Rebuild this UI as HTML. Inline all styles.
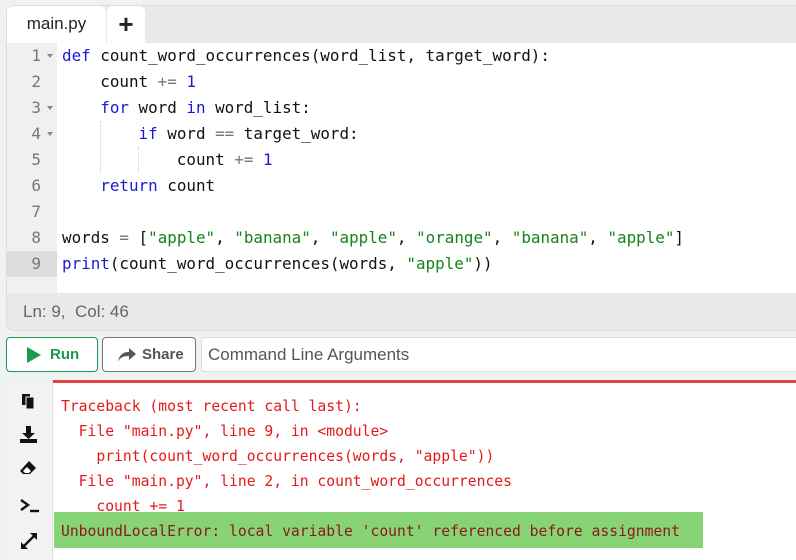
<!DOCTYPE html>
<html><head><style>
*{margin:0;padding:0;box-sizing:border-box}
body{width:796px;height:556px;background:#eef2f3;font-family:"Liberation Sans",sans-serif;position:relative;overflow:hidden}
.ed{position:absolute;left:6px;top:5px;width:800px;height:326px;background:#e9e9e9;border-radius:8px;border:1px solid #dcdcdc}
.tab{position:absolute;top:0;height:37px;background:#fff;border-radius:6px 6px 0 0;font-size:17px;color:#222;text-align:center;line-height:36px}
.code{position:absolute;left:0;top:37px;width:800px;height:250px;background:#fff}
.gut{position:absolute;left:0;top:0;width:50px;height:250px;background:#f0f0f0}
.ln{position:absolute;left:0;width:50px;height:26px;font:16px "DejaVu Sans Mono",monospace;color:#777;line-height:26px}
.ln span{position:absolute;right:16px}
.ln i{position:absolute;left:40px;top:11px;border:3.5px solid transparent;border-top:4px solid #888;border-bottom:0}
.l{position:absolute;left:55px;height:26px;font:15.9px "DejaVu Sans Mono",monospace;line-height:26px;white-space:pre;color:#111}
.k{color:#1a1ad6}.n{color:#1a1ad6}.s{color:#16821a}.o{color:#777}
.status{position:absolute;left:23px;font-size:17px;color:#666}
.btn{position:absolute;top:337px;height:35px;border-radius:4px;background:#fff;font-weight:bold;font-size:15px;line-height:33px}
.inp{position:absolute;left:201px;top:337px;width:600px;height:35px;border:1px solid #ddd;border-radius:4px;background:#fff;font-size:17px;color:#555;line-height:33px;padding-left:6px}
.out{position:absolute;left:6px;top:380px;width:800px;height:180px;background:#fff;border-radius:8px 0 0 0}
.side{position:absolute;left:0;top:0;width:47px;height:180px;background:#f2f2f2;border-radius:8px 0 0 0;border-right:1px solid #ddd}
.red{position:absolute;left:47px;top:0;width:760px;height:3px;background:#d44}
.o1{position:absolute;left:55px;font:14.7px "DejaVu Sans Mono",monospace;color:#e51919;white-space:pre;line-height:25px}
.green{position:absolute;left:48px;top:132px;width:649px;height:36px;background:#88d474}
.ic{position:absolute;left:14px}
</style></head><body>
<div class="ed">
 <div class="tab" style="left:0;width:99px">main.py</div>
 <div class="tab" style="left:100px;width:38px;font-size:26px;font-weight:bold">+</div>
 <div class="code">
  <div class="gut"></div>
  <div class="ln" style="top:0"><span>1</span><i></i></div>
  <div class="ln" style="top:26px"><span>2</span></div>
  <div class="ln" style="top:52px"><span>3</span><i></i></div>
  <div class="ln" style="top:78px"><span>4</span><i></i></div>
  <div class="ln" style="top:104px"><span>5</span></div>
  <div class="ln" style="top:130px"><span>6</span></div>
  <div class="ln" style="top:156px"><span>7</span></div>
  <div class="ln" style="top:182px"><span>8</span></div>
  <div class="ln" style="top:208px;background:#ddd"><span>9</span></div>
  <div style="position:absolute;left:93px;top:78px;height:52px;border-left:1px dotted #ccc"></div>
  <div style="position:absolute;left:131px;top:104px;height:26px;border-left:1px dotted #ccc"></div>
  <div class="l" style="top:0"><span class="k">def</span> count_word_occurrences(word_list, target_word):</div>
  <div class="l" style="top:26px">    count <span class="o">+=</span> <span class="n">1</span></div>
  <div class="l" style="top:52px">    <span class="k">for</span> word <span class="k">in</span> word_list:</div>
  <div class="l" style="top:78px">        <span class="k">if</span> word <span class="o">==</span> target_word:</div>
  <div class="l" style="top:104px">            count <span class="o">+=</span> <span class="n">1</span></div>
  <div class="l" style="top:130px">    <span class="k">return</span> count</div>
  <div class="l" style="top:182px">words <span class="o">=</span> [<span class="s">"apple"</span>, <span class="s">"banana"</span>, <span class="s">"apple"</span>, <span class="s">"orange"</span>, <span class="s">"banana"</span>, <span class="s">"apple"</span>]</div>
  <div class="l" style="top:208px"><span class="k">print</span>(count_word_occurrences(words, <span class="s">"apple"</span>))</div>
 </div>
</div>
<div class="status" style="top:302px">Ln: 9,&nbsp; Col: 46</div>
<div class="btn" style="left:6px;width:92px;border:1px solid #1a9a4a;color:#1a9a4a"><svg style="position:absolute;left:20px;top:9px" width="14" height="16"><path d="M0 0L14 8L0 16Z" fill="#1a9a4a"/></svg><span style="position:absolute;left:43px">Run</span></div>
<div class="btn" style="left:102px;width:94px;border:1px solid #777;color:#555"><svg style="position:absolute;left:15px;top:10px" width="18" height="14"><path d="M11 0L18 6L11 12V8C6 8 2 9 0 14C1 8 4 4 11 4Z" fill="#555"/></svg><span style="position:absolute;left:39px">Share</span></div>
<div class="inp">Command Line Arguments</div>
<div class="out">
 <div class="side">
  <svg class="ic" style="top:12px" width="16" height="18"><path d="M2 2h8v11H2z" fill="#111"/><path d="M6 5h8v12H6z" fill="#111" stroke="#f2f2f2" stroke-width="1"/></svg>
  <svg class="ic" style="top:46px" width="18" height="18"><path d="M6 0h5v7h4l-6.5 6L2 7h4z M0 13h17v4H0z" fill="#111"/></svg>
  <svg class="ic" style="top:80px" width="18" height="16"><path d="M9 1l7 7-6 6H3L0 11z" fill="#111"/><path d="M3 11l4-4 4 4-2 2H5z" fill="#fff"/></svg>
  <svg class="ic" style="top:118px" width="20" height="16"><path d="M1 2l7 5-7 5" stroke="#111" stroke-width="2.4" fill="none"/><path d="M10 13h9" stroke="#111" stroke-width="2.4"/></svg>
  <svg class="ic" style="top:152px" width="18" height="18"><path d="M3 15L15 3" stroke="#111" stroke-width="2.4"/><path d="M10 1h7v7zM1 10v7h7z" fill="#111"/></svg>
 </div>
 <div class="red"></div>
 <div class="green"></div>
 <div class="o1" style="top:14px;left:55px">Traceback (most recent call last):
  File "main.py", line 9, in &lt;module&gt;
    print(count_word_occurrences(words, "apple"))
  File "main.py", line 2, in count_word_occurrences
    count += 1
<span style="color:#8a1a1a">UnboundLocalError: local variable 'count' referenced before assignment</span></div>
</div>
</body></html>
